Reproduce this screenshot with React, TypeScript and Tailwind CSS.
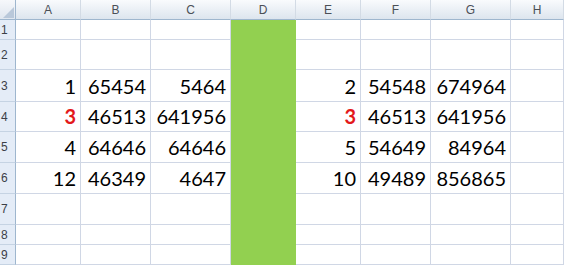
const cols = ["A", "B", "C", "D", "E", "F", "G", "H"];

type Cell = { v: string; red?: boolean };

const rows: { n: number; h: string; cells: (Cell | null)[] }[] = [
  { n: 1, h: "h-[20px]", cells: [] },
  { n: 2, h: "h-[30px]", cells: [] },
  {
    n: 3,
    h: "h-[32px]",
    cells: [{ v: "1" }, { v: "65454" }, { v: "5464" }, null, { v: "2" }, { v: "54548" }, { v: "674964" }],
  },
  {
    n: 4,
    h: "h-[30px]",
    cells: [{ v: "3", red: true }, { v: "46513" }, { v: "641956" }, null, { v: "3", red: true }, { v: "46513" }, { v: "641956" }],
  },
  {
    n: 5,
    h: "h-[31px]",
    cells: [{ v: "4" }, { v: "64646" }, { v: "64646" }, null, { v: "5" }, { v: "54649" }, { v: "84964" }],
  },
  {
    n: 6,
    h: "h-[31px]",
    cells: [{ v: "12" }, { v: "46349" }, { v: "4647" }, null, { v: "10" }, { v: "49489" }, { v: "856865" }],
  },
  { n: 7, h: "h-[31px]", cells: [] },
  { n: 8, h: "h-[20px]", cells: [] },
  { n: 9, h: "h-[20px]", cells: [] },
];

const grid = "grid grid-cols-[16px_65px_70px_80px_65px_65px_70px_80px_1fr]";

export default function App() {
  return (
    <div className="w-[564px] h-[266px] overflow-hidden bg-white font-['Liberation_Sans',sans-serif]">
      {/* column headers */}
      <div className={`${grid} h-[20px]`}>
        <div className="relative bg-gradient-to-b from-[#f6f8fb] to-[#dfe6ef] border-r border-b border-[#9eb6ce]">
          <svg className="absolute right-[1px] bottom-[1px]" width="11" height="11" viewBox="0 0 11 11">
            <polygon points="11,0 11,11 0,11" fill="#b9c8da" />
          </svg>
        </div>
        {cols.map((c) => (
          <div
            key={c}
            className="flex items-center justify-center bg-gradient-to-b from-[#f9fbfd] to-[#dde5ee] border-r border-r-[#d3dbe5] border-b border-b-[#9eb6ce] text-[12px] text-[#4a4f57]"
          >
            {c}
          </div>
        ))}
      </div>

      {rows.map((r) => (
        <div key={r.n} className={`${grid} ${r.h}`}>
          <div className="flex items-center pl-[1px] bg-[#e4ecf7] border-r border-r-[#9eb6ce] border-b border-b-[#c5d3e3] text-[12px] text-[#3c4047]">
            {r.n}
          </div>
          {cols.map((c, i) =>
            c === "D" ? (
              <div key={c} className="bg-[#92d050]" />
            ) : (
              <div
                key={c}
                className={`flex items-end justify-end pr-[4px] pb-[3px] border-r border-b border-[#d0d7e5] font-['Lato',sans-serif] text-[20px] leading-[24px] ${
                  r.cells[i]?.red ? "text-[#e3191b] font-bold" : "text-black"
                }`}
              >
                {r.cells[i]?.v}
              </div>
            ),
          )}
        </div>
      ))}
    </div>
  );
}
